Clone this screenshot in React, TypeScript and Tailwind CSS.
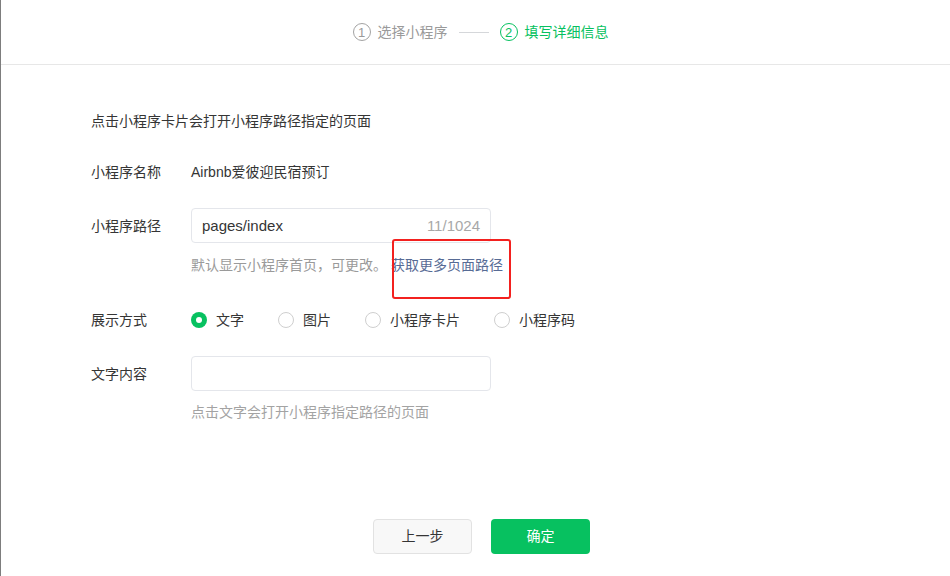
import React from "react";

type StepProps = {
    index: number;
    label: string;
    active?: boolean;
};

const Step: React.FC<StepProps> = ({ index, label, active }) => (
    <div className={`flex items-center gap-[7px] ${active ? "text-[#07c160]" : "text-[#9a9a9a]"}`}>
        <span
            className={`w-[18px] h-[18px] rounded-full border flex items-center justify-center text-[13px] leading-none ${
                active ? "border-[#07c160]" : "border-[#a3a3a3]"
            }`}
        >
            {index}
        </span>
        <span className="text-[14px] leading-5">{label}</span>
    </div>
);

type RadioProps = {
    label: string;
    checked?: boolean;
};

const Radio: React.FC<RadioProps> = ({ label, checked }) => (
    <label className="flex items-center gap-[9px] mr-[34px]">
        {checked ? (
            <span className="w-4 h-4 rounded-full bg-[#07c160] flex items-center justify-center">
                <span className="w-[6px] h-[6px] rounded-full bg-white" />
            </span>
        ) : (
            <span className="w-4 h-4 rounded-full border border-[#cfcfcf] bg-white" />
        )}
        <span className="text-[14px] leading-5 text-[#353535]">{label}</span>
    </label>
);

const FormRow: React.FC<{ label: string; children: React.ReactNode; className?: string }> = ({
    label,
    children,
    className = "",
}) => (
    <div className={`flex items-center ${className}`}>
        <div className="w-[100px] shrink-0 text-[14px] leading-5 text-[#353535]">{label}</div>
        {children}
    </div>
);

export default function App() {
    const options = ["文字", "图片", "小程序卡片", "小程序码"];

    return (
        <div className="relative h-[576px] bg-white border-l border-[#7d7d7d] overflow-hidden font-['Liberation_Sans','Noto_Sans_CJK_SC',sans-serif]">
            {/* steps */}
            <div className="h-[65px] border-b border-[#e7e7e7] flex items-center justify-center pl-[10px]">
                <Step index={1} label="选择小程序" />
                <div className="w-[30px] h-px bg-[#d5d7da] mx-[11px]" />
                <Step index={2} label="填写详细信息" active />
            </div>

            <div className="pl-[90px]">
                <p className="mt-[46px] text-[14px] leading-5 text-[#353535]">点击小程序卡片会打开小程序路径指定的页面</p>

                <FormRow label="小程序名称" className="mt-[31px]">
                    <span className="text-[14px] leading-5 text-[#353535]">Airbnb爱彼迎民宿预订</span>
                </FormRow>

                <FormRow label="小程序路径" className="mt-[26px]">
                    <div className="w-[300px] h-[35px] border border-[#e4e6eb] rounded-[4px] flex items-center justify-between px-[10px] pt-[2px]">
                        <span className="text-[15px] text-[#353535]">pages/index</span>
                        <span className="text-[15px] text-[#a8a8a8]">11/1024</span>
                    </div>
                </FormRow>
                <div className="ml-[100px] mt-[12px] text-[14px] leading-5 flex">
                    <span className="text-[#9a9a9a]">默认显示小程序首页，可更改。</span>
                    <a className="ml-[4px] text-[#576b95]">获取更多页面路径</a>
                </div>

                <FormRow label="展示方式" className="mt-[35px]">
                    <div className="flex items-center">
                        {options.map((opt, i) => (
                            <Radio key={opt} label={opt} checked={i === 0} />
                        ))}
                    </div>
                </FormRow>

                <FormRow label="文字内容" className="mt-[26px]">
                    <div className="w-[300px] h-[35px] border border-[#e4e6eb] rounded-[4px]" />
                </FormRow>
                <p className="ml-[100px] mt-[11px] text-[14px] leading-5 text-[#a3a3a3]">点击文字会打开小程序指定路径的页面</p>
            </div>

            <div className="mt-[97px] flex justify-center gap-[19px] pl-[12px]">
                <button className="w-[99px] h-[35px] rounded-[4px] border border-[#e2e2e2] bg-[#f8f8f8] text-[14px] text-[#353535]">
                    上一步
                </button>
                <button className="w-[99px] h-[35px] rounded-[4px] bg-[#07c160] text-[14px] text-white">确定</button>
            </div>

            {/* annotation box */}
            <div className="absolute left-[391px] top-[239px] w-[119px] h-[60px] border-2 border-[#f3211f] rounded-[3px]" />
        </div>
    );
}
